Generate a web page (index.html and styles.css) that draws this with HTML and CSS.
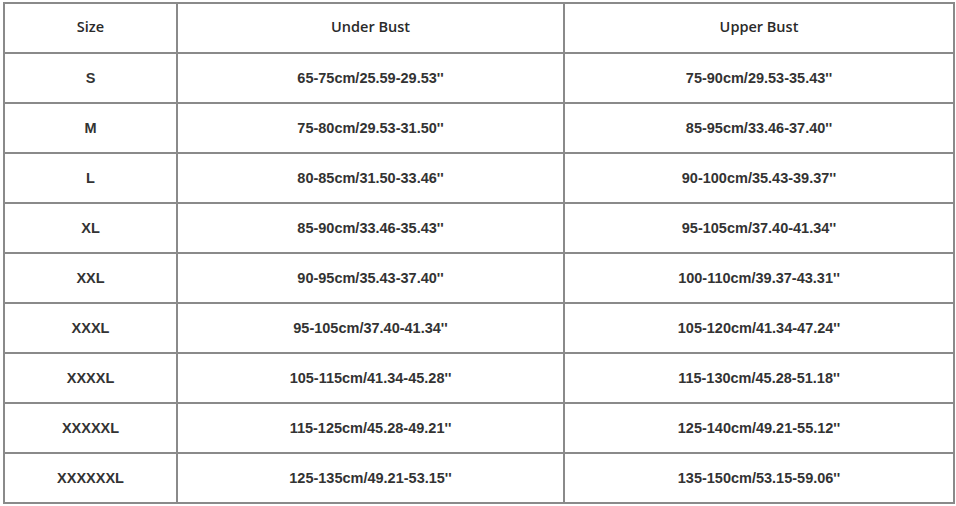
FILE: index.html
```html
<!DOCTYPE html>
<html>
<head>
<meta charset="utf-8">
<link rel="stylesheet" href="styles.css">
</head>
<body>
<table class="size-table">
  <colgroup>
    <col class="c-size">
    <col class="c-under">
    <col class="c-upper">
  </colgroup>
  <thead>
    <tr><th class="hd">Size</th><th class="hd">Under Bust</th><th class="hd">Upper Bust</th></tr>
  </thead>
  <tbody>
    <tr><td>S</td><td>65-75cm/25.59-29.53''</td><td>75-90cm/29.53-35.43''</td></tr>
    <tr><td>M</td><td>75-80cm/29.53-31.50''</td><td>85-95cm/33.46-37.40''</td></tr>
    <tr><td>L</td><td>80-85cm/31.50-33.46''</td><td>90-100cm/35.43-39.37''</td></tr>
    <tr><td>XL</td><td>85-90cm/33.46-35.43''</td><td>95-105cm/37.40-41.34''</td></tr>
    <tr><td>XXL</td><td>90-95cm/35.43-37.40''</td><td>100-110cm/39.37-43.31''</td></tr>
    <tr><td>XXXL</td><td>95-105cm/37.40-41.34''</td><td>105-120cm/41.34-47.24''</td></tr>
    <tr><td>XXXXL</td><td>105-115cm/41.34-45.28''</td><td>115-130cm/45.28-51.18''</td></tr>
    <tr><td>XXXXXL</td><td>115-125cm/45.28-49.21''</td><td>125-140cm/49.21-55.12''</td></tr>
    <tr><td>XXXXXXL</td><td>125-135cm/49.21-53.15''</td><td>135-150cm/53.15-59.06''</td></tr>
  </tbody>
</table>
</body>
</html>
```

FILE: styles.css
```css
html, body {
  background: #ffffff;
}
body {
  margin: 0;
  padding: 2px 0 0 3px;
}
.size-table {
  border-collapse: collapse;
  table-layout: fixed;
  width: 950px;
}
.c-size { width: 173px; }
.c-under { width: 387px; }
.c-upper { width: 390px; }
.size-table th,
.size-table td {
  border: 2px solid #8a8a8a;
  height: 48px;
  padding: 0;
  text-align: center;
  vertical-align: middle;
  color: #333333;
  font-family: "Liberation Sans", Arial, sans-serif;
  font-weight: bold;
  font-size: 14.5px;
}
.size-table th.hd {
  font-family: "Open Sans", "Liberation Sans", sans-serif;
  font-weight: 600;
  font-size: 14.5px;
  color: #2a2a2a;
  padding-bottom: 4px;
  height: 44px;
}
```
